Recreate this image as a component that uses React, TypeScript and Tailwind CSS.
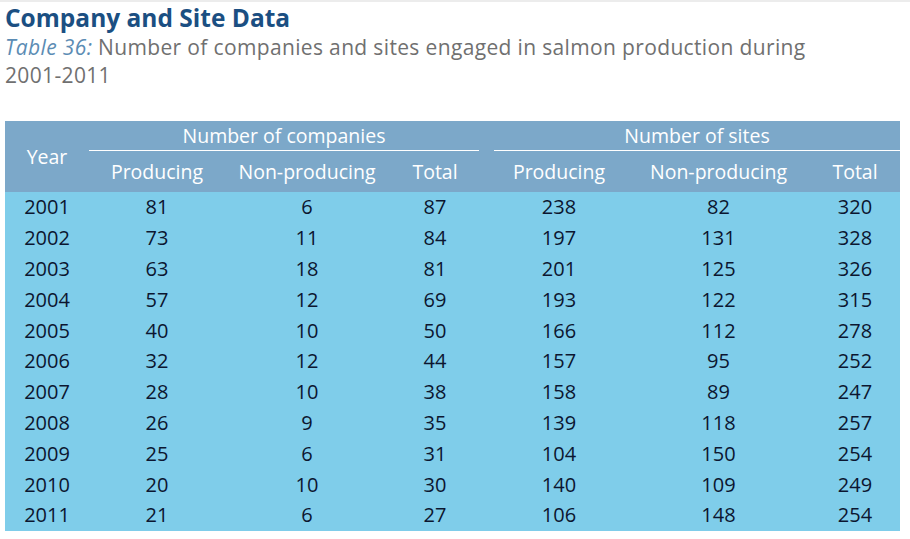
const rows: [string, number, number, number, number, number, number][] = [
  ["2001", 81, 6, 87, 238, 82, 320],
  ["2002", 73, 11, 84, 197, 131, 328],
  ["2003", 63, 18, 81, 201, 125, 326],
  ["2004", 57, 12, 69, 193, 122, 315],
  ["2005", 40, 10, 50, 166, 112, 278],
  ["2006", 32, 12, 44, 157, 95, 252],
  ["2007", 28, 10, 38, 158, 89, 247],
  ["2008", 26, 9, 35, 139, 118, 257],
  ["2009", 25, 6, 31, 104, 150, 254],
  ["2010", 20, 10, 30, 140, 109, 249],
  ["2011", 21, 6, 27, 106, 148, 254],
]

const cols = "grid grid-cols-[84px_136px_164px_92px_156px_163px_100px]"

export default function App() {
  return (
    <div className="w-[910px] h-[539px] bg-white border-t-2 border-[#ececec] overflow-hidden" style={{ fontFamily: '"Open Sans", sans-serif' }}>
      <div className="px-[5px]">
        <h1 className="text-[24.5px] leading-[30px] font-bold text-[#1b4f82] mt-[1px]">Company and Site Data</h1>
        <p className="text-[21px] leading-[28px] tracking-[0.35px] text-[#707070]">
          <span className="italic text-[#5b8cb4]">Table 36:</span> Number of companies and sites engaged in salmon production during
          <br />
          2001-2011
        </p>

        <div className="mt-[32px] w-[895px]">
          <div className="bg-[#7ca8c9] text-white text-[19.5px]">
            <div className={cols}>
              <div className="row-span-2 flex items-center justify-center">Year</div>
              <div className="col-span-3 h-[30px] flex items-center justify-center border-b border-white mr-[2px]">Number of companies</div>
              <div className="col-span-3 h-[30px] flex items-center justify-center border-b border-white ml-[13px]">Number of sites</div>
              <div className="h-[41px] flex items-center justify-center">Producing</div>
              <div className="h-[41px] flex items-center justify-center">Non-producing</div>
              <div className="h-[41px] flex items-center justify-center">Total</div>
              <div className="h-[41px] flex items-center justify-center">Producing</div>
              <div className="h-[41px] flex items-center justify-center">Non-producing</div>
              <div className="h-[41px] flex items-center justify-center pl-[10px]">Total</div>
            </div>
          </div>
          <div className="bg-[#7fcdea] text-[#0c1630] text-[20px]">
            {rows.map((r) => (
              <div key={r[0]} className={`${cols} h-[30.8px] items-center text-center`}>
                <div>{r[0]}</div>
                <div>{r[1]}</div>
                <div>{r[2]}</div>
                <div>{r[3]}</div>
                <div>{r[4]}</div>
                <div>{r[5]}</div>
                <div className="pl-[10px]">{r[6]}</div>
              </div>
            ))}
          </div>
        </div>
      </div>
    </div>
  )
}
